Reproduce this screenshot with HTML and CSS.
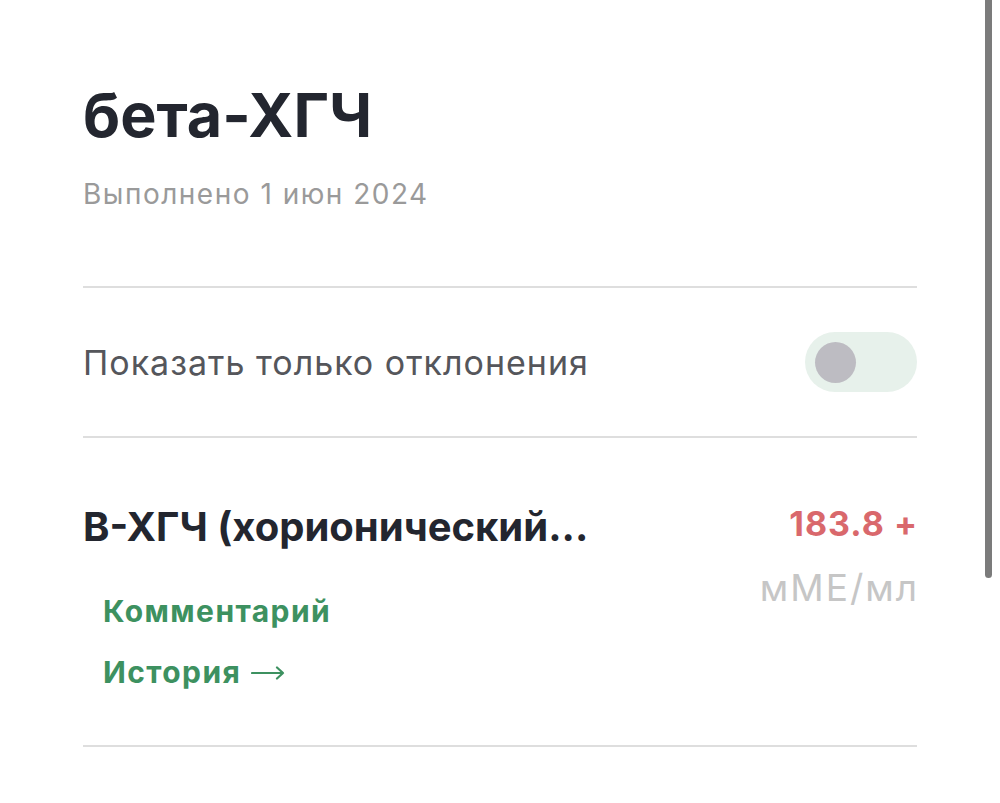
FILE: index.html
```html
<!DOCTYPE html>
<html>
    <head>
        <meta charset="UTF-8" name="viewport" content="width=device-width, initial-scale=1.0">
        <title>бета-ХГЧ</title>
        <link rel="stylesheet" href="styles.css">
    </head>
    <body>
        <div class="page">
            <div class="header">
                <h1 class="title">бета-ХГЧ</h1>
                <div class="date">Выполнено 1 июн 2024</div>
            </div>

            <div class="filter-row">
                <span class="filter-label">Показать только отклонения</span>
                <div class="toggle"><div class="knob"></div></div>
            </div>

            <div class="result">
                <div class="result-main">
                    <div class="result-name">В-ХГЧ (хорионический...</div>
                    <div class="links">
                        <a class="link">Комментарий</a>
                        <a class="link">История
                            <svg class="arrow" width="34" height="14" viewBox="0 0 34 14">
                                <path d="M1 7H32M26 1.5L32 7L26 12.5" fill="none" stroke="#3d9160" stroke-width="2.2" stroke-linecap="round" stroke-linejoin="round"/>
                            </svg>
                        </a>
                    </div>
                </div>
                <div class="result-value">
                    <div class="value">183.8 +</div>
                    <div class="unit">мМЕ/мл</div>
                </div>
            </div>
        </div>
        <div class="scrollbar"></div>
    </body>
</html>
```

FILE: styles.css
```css
/* base */
body {
    margin: 0;
    background-color: #ffffff;
    font-family: Inter, "Noto Sans", sans-serif;
}

.page {
    padding: 0 83px;
}

.header {
    padding-top: 80px;
    padding-bottom: 75px;
    border-bottom: 2px solid #dedede;
}

.title {
    margin: 0;
    font-size: 61px;
    font-weight: 700;
    color: #23262f;
    line-height: 70px;
}

.date {
    margin-top: 27px;
    font-size: 28px;
    letter-spacing: 1.5px;
    color: #9a9a9a;
    line-height: 34px;
}

.filter-row {
    display: flex;
    justify-content: space-between;
    align-items: center;
    height: 148px;
    border-bottom: 2px solid #dedede;
}

.filter-label {
    font-size: 34px;
    letter-spacing: 1px;
    color: #55565b;
}

.toggle {
    width: 112px;
    height: 60px;
    border-radius: 30px;
    background-color: #e7f1eb;
    display: flex;
    align-items: center;
    padding-left: 10px;
    box-sizing: border-box;
}

.knob {
    width: 41px;
    height: 41px;
    border-radius: 50%;
    background-color: #bdbcc2;
}

.result {
    display: flex;
    justify-content: space-between;
    padding-top: 64px;
    padding-bottom: 53px;
    border-bottom: 2px solid #dedede;
}

.result-name {
    font-size: 40px;
    font-weight: 700;
    color: #23262f;
    line-height: 50px;
}

.links {
    display: flex;
    flex-direction: column;
    gap: 21px;
    padding-left: 20px;
    margin-top: 39px;
}

.link {
    display: flex;
    align-items: center;
    gap: 10px;
    font-size: 30px;
    font-weight: 700;
    letter-spacing: 1.4px;
    color: #3d9160;
    line-height: 40px;
}

.arrow {
    margin-top: 2px;
}

.result-value {
    text-align: right;
}

.value {
    font-size: 34px;
    font-weight: 700;
    letter-spacing: 1px;
    margin-right: -1px;
    color: #d9686c;
    line-height: 44px;
}

.unit {
    margin-top: 22px;
    margin-right: -2px;
    font-size: 37px;
    letter-spacing: 2px;
    color: #c6c6c6;
    line-height: 40px;
}

.scrollbar {
    position: absolute;
    top: 0;
    left: 985px;
    width: 7px;
    height: 578px;
    border-radius: 0 0 4px 4px;
    background-color: #7b7b7b;
}
```
